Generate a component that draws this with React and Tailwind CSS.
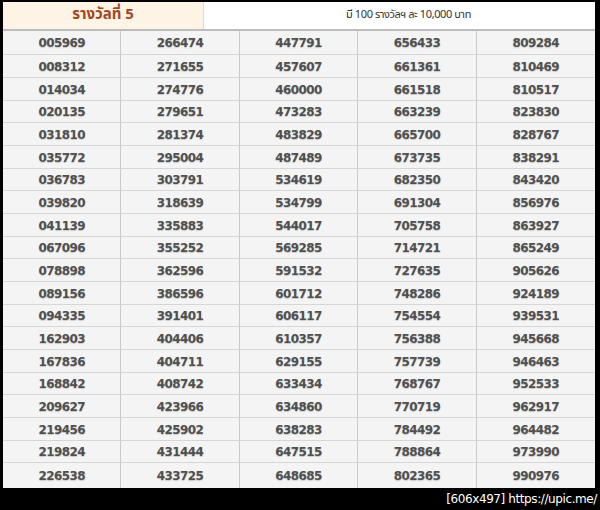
import React from "react";

const cols = [
  ["005969","008312","014034","020135","031810","035772","036783","039820","041139","067096","078898","089156","094335","162903","167836","168842","209627","219456","219824","226538"],
  ["266474","271655","274776","279651","281374","295004","303791","318639","335883","355252","362596","386596","391401","404406","404711","408742","423966","425902","431444","433725"],
  ["447791","457607","460000","473283","483829","487489","534619","534799","544017","569285","591532","601712","606117","610357","629155","633434","634860","638283","647515","648685"],
  ["656433","661361","661518","663239","665700","673735","682350","691304","705758","714721","727635","748286","754554","756388","757739","768767","770719","784492","788864","802365"],
  ["809284","810469","810517","823830","828767","838291","843420","856976","863927","865249","905626","924189","939531","945668","946463","952533","962917","964482","973990","990976"],
];

const thai = { fontFamily: 'Tahoma, "Noto Sans Thai", "Loma", "Garuda", "Noto Sans", sans-serif' };

export default function App() {
  const rows = Array.from({ length: 20 }, (_, i) => cols.map((c) => c[i]));
  return (
    <div className="w-[600px] h-[510px] bg-black pt-[2px] pl-[3px] flex flex-col">
      <div className="w-[592px] bg-[#f4f4f4]">
        <div className="h-[29px] flex border-b-2 border-[#bdbdbd]">
          <div
            className="w-[201px] bg-[#fdf4e6] border-r border-[#d9d9d9] flex items-center justify-center text-[15px] font-bold text-[#a4471c]"
            style={thai}
          >
            รางวัลที่ 5
          </div>
          <div
            className="flex-1 bg-white flex items-center justify-center pl-[18px] text-[11px] tracking-[-0.4px] text-[#333]"
            style={thai}
          >
            มี 100 รางวัลฯ ละ 10,000 บาท
          </div>
        </div>
        {rows.map((r, i) => (
          <div
            key={i}
            className={
              "grid grid-cols-5 " +
              (i === 0
                ? "h-[24px] border-b border-[#d6d6d6]"
                : i === 19
                ? "h-[25px]"
                : i % 3 === 0
                ? "h-[22px] border-b border-[#d6d6d6]"
                : "h-[23px] border-b border-[#d6d6d6]")
            }
          >
            {r.map((v, j) => (
              <div
                key={j}
                className={
                  "flex items-center justify-center pt-[1px] text-[12px] font-bold text-[#505050] tracking-[-0.6px] [text-shadow:0_1px_1px_rgba(0,0,0,0.18)] font-['DejaVu_Sans',sans-serif] " +
                  (j < 4 ? "border-r border-[#cacaca]" : "")
                }
              >
                {v}
              </div>
            ))}
          </div>
        ))}
      </div>
      <div className="flex-1 flex items-center justify-end pr-[3px] text-white text-[12px] font-['DejaVu_Sans',sans-serif] tracking-[-0.4px]">
        [606x497] https://upic.me/
      </div>
    </div>
  );
}
